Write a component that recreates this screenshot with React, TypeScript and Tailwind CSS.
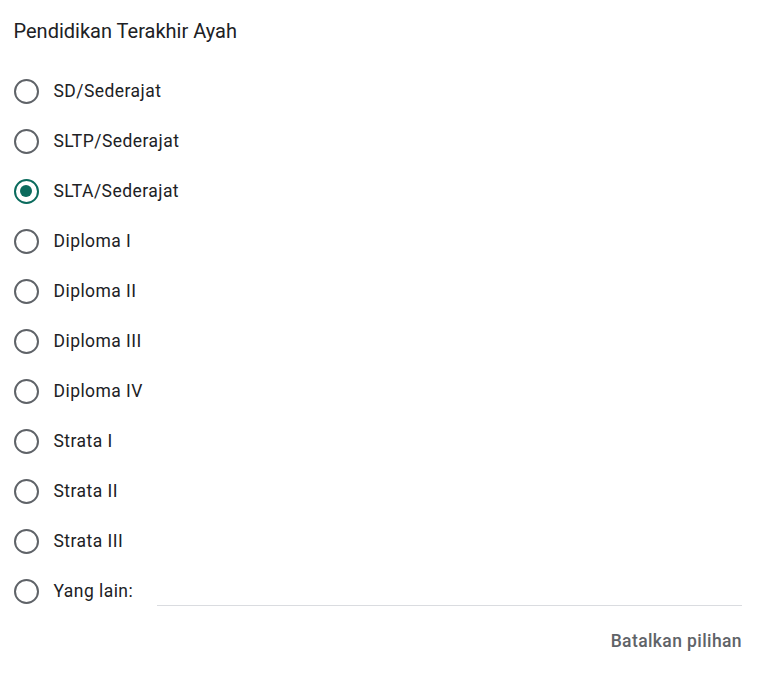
import { useState } from "react";

const options = [
  "SD/Sederajat",
  "SLTP/Sederajat",
  "SLTA/Sederajat",
  "Diploma I",
  "Diploma II",
  "Diploma III",
  "Diploma IV",
  "Strata I",
  "Strata II",
  "Strata III",
];

function Radio({ checked }: { checked: boolean }) {
  return (
    <div
      className={`flex h-[25px] w-[25px] shrink-0 items-center justify-center rounded-full border-[2.5px] ${
        checked ? "border-[#0b6b5d]" : "border-[#5f6368]"
      }`}
    >
      {checked && <div className="h-[12.5px] w-[12.5px] rounded-full bg-[#0b6b5d]" />}
    </div>
  );
}

export default function App() {
  const [selected, setSelected] = useState<string | null>("SLTA/Sederajat");

  return (
    <div className="min-h-screen bg-white font-['Roboto',sans-serif] text-[#202124]">
      <div className="pl-[13.5px] pr-[24px] pt-[16px]">
        <div className="h-[30px] text-[20px] leading-[30px]">Pendidikan Terakhir Ayah</div>

        <div className="mt-[20px]">
          {options.map((opt) => (
            <div
              key={opt}
              className="flex h-[50px] cursor-pointer items-center"
              onClick={() => setSelected(opt)}
            >
              <Radio checked={selected === opt} />
              <span className="ml-[15px] text-[17.5px] tracking-[0.45px]">{opt}</span>
            </div>
          ))}

          {/* Yang lain */}
          <div
            className="flex h-[50px] items-center"
            onClick={() => setSelected("other")}
          >
            <Radio checked={selected === "other"} />
            <span className="ml-[15px] text-[17.5px] tracking-[0.45px]">Yang lain:</span>
            <div className="ml-[24px] mt-[29px] h-px flex-1 bg-[#dadce0]" />
          </div>
        </div>

        <div className="flex justify-end pt-[12px]">
          <button
            className="text-[17.5px] font-medium tracking-[0.4px] text-[#5f6368]"
            onClick={() => setSelected(null)}
          >
            Batalkan pilihan
          </button>
        </div>
      </div>
    </div>
  );
}
